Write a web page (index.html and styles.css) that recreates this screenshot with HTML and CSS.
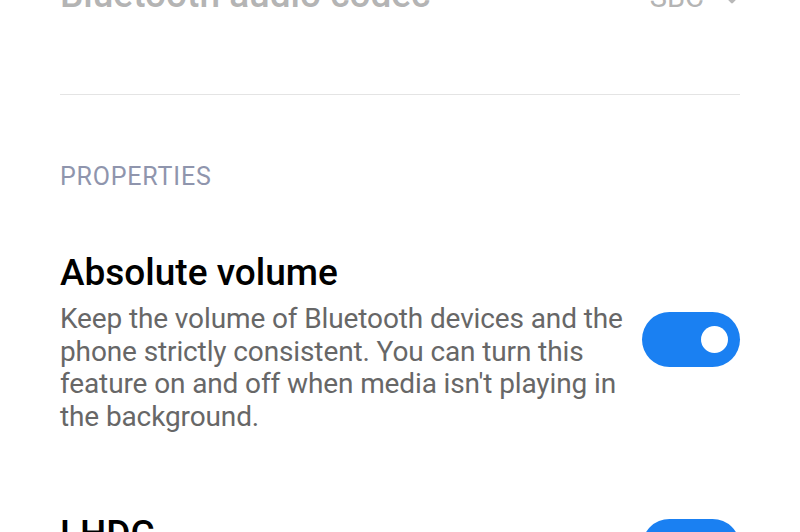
FILE: index.html
```html
<!DOCTYPE html>
<html>
<head>
<meta charset="utf-8">
<link rel="stylesheet" href="styles.css">
</head>
<body>
<div class="screen">
  <div class="row codec">
    <span class="codec-title">Bluetooth audio codec</span>
    <span class="codec-value">SBC<svg class="chev" width="14" height="12" viewBox="0 0 14 12"><path d="M2 3 L7 8 L12 3" fill="none" stroke="#b8b8b8" stroke-width="2.6" stroke-linecap="round" stroke-linejoin="round"/></svg></span>
  </div>
  <div class="divider"></div>
  <div class="section">PROPERTIES</div>
  <div class="row item">
    <div class="text">
      <div class="title">Absolute volume</div>
      <div class="desc">Keep the volume of Bluetooth devices and the phone strictly consistent. You can turn this feature on and off when media isn't playing in the background.</div>
    </div>
    <div class="toggle on"><span class="knob"></span></div>
  </div>
  <div class="row item lhdc">
    <div class="text">
      <div class="title">LHDC</div>
    </div>
    <div class="toggle on"><span class="knob"></span></div>
  </div>
</div>
</body>
</html>
```
FILE: styles.css
```css
html, body {
  margin: 0;
  padding: 0;
  background: #ffffff;
  overflow: hidden;
}
body {
  font-family: Roboto, "Noto Sans", sans-serif;
  width: 800px;
  height: 532px;
}
.screen {
  padding: 0 60px;
  margin-top: -25px;
}
.row {
  display: flex;
  align-items: center;
  justify-content: space-between;
}
.codec {
  height: 40px;
  align-items: baseline;
}
.codec-title {
  font-size: 37px;
  line-height: 40px;
  font-weight: 500;
  color: #b4b4b4;
}
.codec-value {
  font-size: 29px;
  line-height: 40px;
  color: #b4b4b4;
  margin-right: 1px;
}
.chev {
  margin-left: 21px;
  vertical-align: 1px;
}
.divider {
  margin-top: 79px;
  height: 1px;
  background: #e4e4e4;
}
.section {
  margin-top: 68px;
  font-size: 25px;
  line-height: 28px;
  letter-spacing: 0.8px;
  color: #8f95ad;
}
.item {
  margin-top: 62px;
  gap: 2px;
}
.item + .item {
  margin-top: 61px;
}
.text {
  flex: 1;
}
.title {
  font-size: 37px;
  line-height: 40px;
  font-weight: 500;
  color: #000000;
}
.desc {
  margin-top: 10px;
  font-size: 28px;
  line-height: 32.7px;
  letter-spacing: -0.12px;
  color: #676767;
}
.toggle {
  width: 98px;
  height: 55px;
  border-radius: 28px;
  background: #1a80f2;
  flex: none;
  display: flex;
  align-items: center;
  justify-content: flex-end;
  padding-right: 12px;
  box-sizing: border-box;
  margin-bottom: 8px;
}
.lhdc .toggle {
  align-self: flex-start;
  margin-top: 24px;
  margin-bottom: 0;
}
.knob {
  width: 27px;
  height: 27px;
  border-radius: 50%;
  background: #ffffff;
}
```
